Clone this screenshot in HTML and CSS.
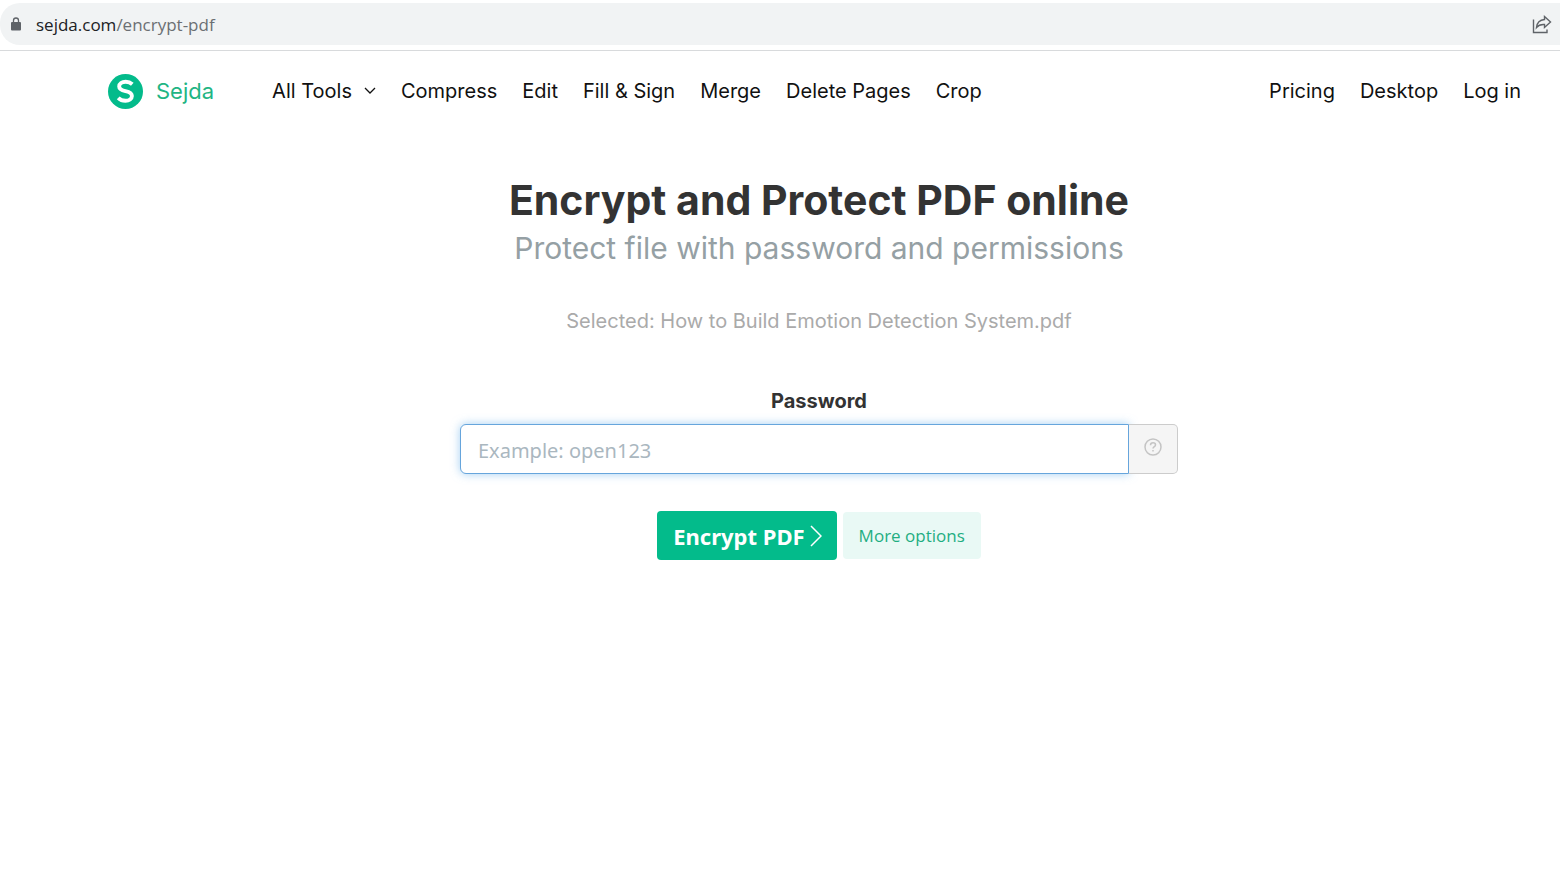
FILE: index.html
```html
<!DOCTYPE html>
<html lang="en">
<head>
    <meta charset="UTF-8">
    <meta name="viewport" content="width=device-width, initial-scale=1.0">
    <title>Encrypt and Protect PDF online</title>
    <link rel="stylesheet" href="styles.css">
</head>
<body>
    <div class="browser-bar">
        <div class="address">
            <svg class="lock" viewBox="0 0 12 16" width="12" height="16">
                <path d="M3.500 7V4.500a2.500 2.500 0 0 1 5 0V7" fill="none" stroke="#5f6368" stroke-width="1.300"/>
                <rect x="1" y="6" width="10" height="8.500" rx="1" fill="#5f6368"/>
            </svg>
            <span class="url"><span class="domain">sejda.com</span>/encrypt-pdf</span>
            <button class="share" type="button" aria-label="Share">
                <svg viewBox="0 0 20 20" width="20" height="20" fill="none" stroke="#5f6368" stroke-width="1.400">
                    <path d="M1.500 5.500v13h13.500v-3"/>
                    <path d="M12.500 2.500L18.500 8l-6 5.500v-3C9 10.200 6.500 11 4.500 13.500 5 9 8 5.800 12.500 5.500z"/>
                </svg>
            </button>
        </div>
    </div>

    <header class="header">
        <a class="brand" href="#">
            <svg viewBox="0 0 36 36" width="35" height="35">
                <circle cx="18" cy="18" r="18" fill="#03bb8b"/>
                <path d="M25 10.500C23 8.700 20.800 8 18.200 8c-4 0-6.700 1.900-6.700 4.800 0 3.200 3 4.100 6.500 4.900 3.600.8 6.600 1.700 6.600 4.900 0 3-2.800 4.900-6.600 4.900-3 0-5.600-1-7.500-3" fill="none" stroke="#fff" stroke-width="4"/>
            </svg>
            <span>Sejda</span>
        </a>
        <nav class="nav">
            <a class="all-tools" href="#">All Tools
                <svg viewBox="0 0 12 8" width="12" height="8">
                    <path d="M1 1l5 5 5-5" fill="none" stroke="#111" stroke-width="1.300"/>
                </svg>
            </a>
            <a href="#">Compress</a>
            <a href="#">Edit</a>
            <a href="#">Fill &amp; Sign</a>
            <a href="#">Merge</a>
            <a href="#">Delete Pages</a>
            <a href="#">Crop</a>
        </nav>
        <nav class="nav account">
            <a href="#">Pricing</a>
            <a href="#">Desktop</a>
            <a href="#">Log in</a>
        </nav>
    </header>

    <main class="main">
        <h1>Encrypt and Protect PDF online</h1>
        <p class="subtitle">Protect file with password and permissions</p>
        <p class="selected">Selected: How to Build Emotion Detection System.pdf</p>

        <form class="form">
            <label for="password">Password</label>
            <div class="input-group">
                <input id="password" type="text" placeholder="Example: open123">
                <button class="help" type="button" aria-label="Help">
                    <svg viewBox="0 0 18 18" width="18" height="18" fill="none" stroke="#c4c4c4" stroke-width="1.500">
                        <circle cx="9" cy="9" r="8"/>
                        <path d="M6.500 7.200C6.500 5.600 7.500 4.800 9 4.800s2.500.9 2.500 2.100c0 1.700-2.500 1.700-2.500 3.600M9 12v1.500"/>
                    </svg>
                </button>
            </div>
            <div class="actions">
                <button class="btn-primary" type="button">Encrypt PDF
                    <svg viewBox="0 0 12 22" width="12" height="22">
                        <path d="M1 1l10 10L1 21" fill="none" stroke="#fff" stroke-width="1.500"/>
                    </svg>
                </button>
                <button class="btn-more" type="button">More options</button>
            </div>
        </form>
    </main>
</body>
</html>
```
FILE: styles.css
```css
* {
    box-sizing: border-box;
}

body {
    margin: 0;
    background: #fff;
    color: #333;
    font-family: Inter, "Liberation Sans", sans-serif;
}

a {
    color: inherit;
    text-decoration: none;
}

button {
    border: 0;
    cursor: pointer;
}

svg {
    display: block;
    flex: none;
}

.browser-bar {
    padding: 3px 0 5px;
    border-bottom: 1px solid #d8dadc;
}

.address {
    display: flex;
    align-items: center;
    height: 42px;
    padding: 0 8px 0 10px;
    background: #f1f3f4;
    border-radius: 20px 0 0 20px;
}

.url {
    margin-left: 14px;
    color: #6b6f73;
    font: 17px "Open Sans", sans-serif;
}

.domain {
    color: #202124;
}

.share {
    margin-left: auto;
    padding: 0;
    background: none;
}

.header {
    display: flex;
    align-items: center;
    height: 80px;
    padding: 0 39px 0 108px;
}

.brand {
    display: flex;
    align-items: center;
    gap: 13px;
    color: #1fb584;
    font-size: 22px;
}

.nav {
    display: flex;
    gap: 25px;
    margin-left: 58px;
    color: #111;
    font-size: 20px;
    white-space: nowrap;
}

.all-tools {
    display: flex;
    align-items: center;
    gap: 12px;
}

.nav.account {
    margin-left: auto;
}

.main {
    padding: 41px 0 0 78px;
    text-align: center;
}

h1 {
    margin: 0;
    font-size: 41px;
    font-weight: 700;
    line-height: 56px;
}

.subtitle {
    margin: 0;
    color: #95a0a4;
    font-size: 30px;
    line-height: 40px;
}

.selected {
    margin: 40px 0 0;
    color: #aaa;
    font-size: 20px;
    line-height: 26px;
}

.form {
    max-width: 718px;
    margin: 54px auto 0;
}

.form label {
    display: block;
    font-size: 20px;
    font-weight: 700;
    line-height: 26px;
}

.input-group {
    display: flex;
    height: 50px;
    margin-top: 10px;
}

.input-group input {
    flex: 1;
    min-width: 0;
    padding: 2px 17px 0;
    border: 1px solid #66a5dc;
    border-radius: 6px 0 0 6px;
    box-shadow: 0 0 10px rgba(102, 175, 233, 0.6);
    outline: none;
    font: 20px "Noto Sans", sans-serif;
}

.input-group input::placeholder {
    color: #aab7bf;
    opacity: 1;
}

.help {
    display: flex;
    justify-content: center;
    width: 49px;
    padding: 13px 0 0;
    background: #f5f5f5;
    border: 1px solid #ccc;
    border-left: 0;
    border-radius: 0 5px 5px 0;
}

.actions {
    display: flex;
    align-items: center;
    justify-content: center;
    gap: 6px;
    margin-top: 37px;
}

.btn-primary {
    display: flex;
    align-items: center;
    gap: 5px;
    height: 49px;
    padding: 0 15px 0 16px;
    background: #03bb8b;
    border-radius: 4px;
    color: #fff;
    font: 700 22px "Noto Sans", sans-serif;
}

.btn-more {
    height: 47px;
    padding: 0 16px;
    background: #e9f9f5;
    border-radius: 4px;
    color: #1fae82;
    font: 17px "Open Sans", sans-serif;
}
```
